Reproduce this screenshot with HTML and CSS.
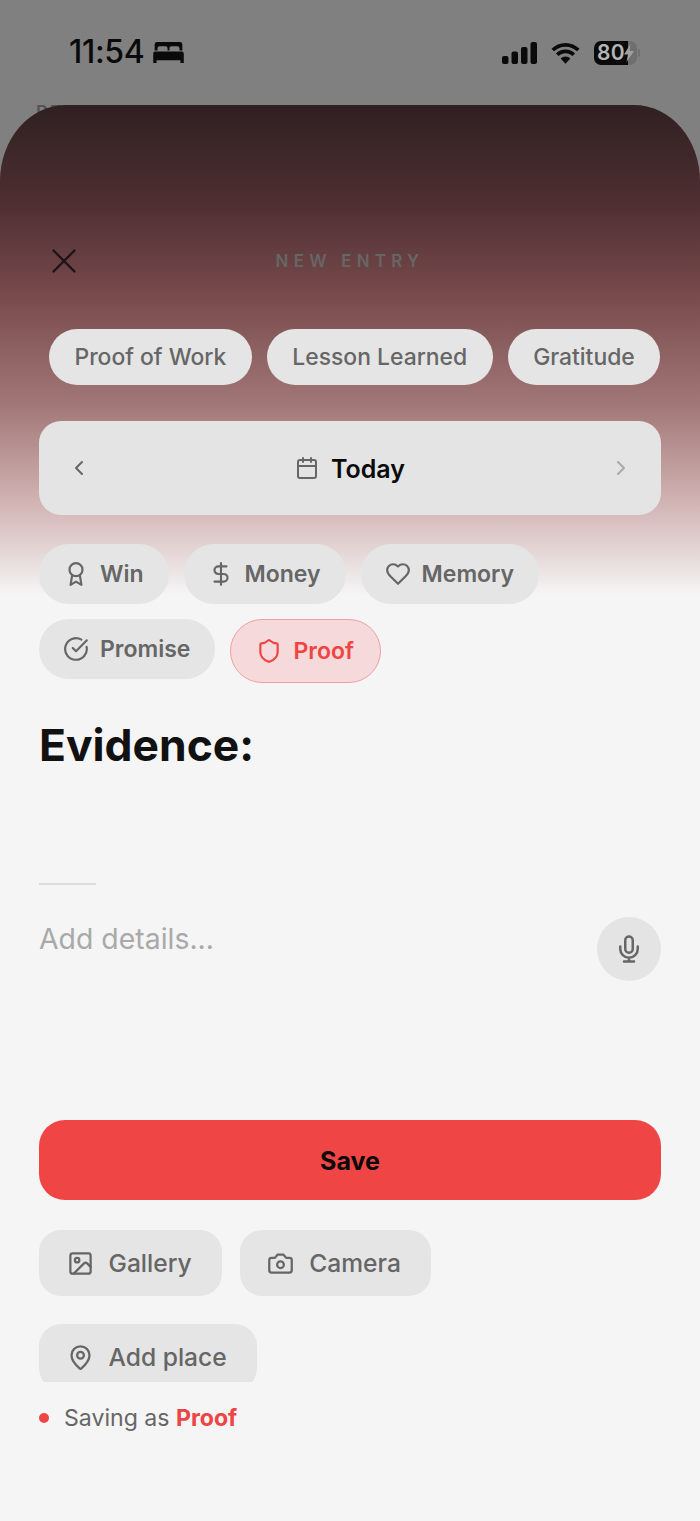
FILE: index.html
```html
<!DOCTYPE html>
<html lang="en">
<head>
    <meta charset="UTF-8">
    <title>New Entry</title>
    <link rel="stylesheet" href="styles.css">
</head>
<body>
    <div class="behind">RECENT</div>

    <header class="status">
        <div class="status-left">
            <span class="time">11:54</span>
            <svg class="bed" viewBox="0 0 32 22"><path d="M4 0h24a2.500 2.500 0 0 1 2.500 2.500V9h-3V6.500a2 2 0 0 0-2-2H19a2 2 0 0 0-2 2V9h-2V6.500a2 2 0 0 0-2-2H6.500a2 2 0 0 0-2 2V9h-3V2.500A2.500 2.500 0 0 1 4 0zM2 10h28a2 2 0 0 1 2 2v10h-3.500v-3h-25v3H0V12a2 2 0 0 1 2-2z"/></svg>
        </div>
        <div class="status-right">
            <svg class="signal" viewBox="0 0 35 22"><rect x="0" y="14" width="6.500" height="8" rx="2"/><rect x="9.500" y="9.500" width="6.500" height="12.500" rx="2"/><rect x="19" y="5" width="6.500" height="17" rx="2"/><rect x="28.500" y="0" width="6.500" height="22" rx="2"/></svg>
            <svg class="wifi" viewBox="0 0 32 22"><path d="M16 4.500c4.600 0 8.800 1.800 11.900 4.800l2.600-2.700C26.700 2.900 21.600.6 16 .6S5.300 2.900 1.500 6.600l2.600 2.700C7.200 6.300 11.400 4.500 16 4.500z"/><path d="M16 11.200c2.800 0 5.300 1.100 7.200 2.900l2.700-2.700c-2.600-2.500-6-4-9.900-4s-7.300 1.500-9.900 4l2.700 2.700c1.900-1.800 4.400-2.900 7.200-2.900z"/><path d="M16 22l5-5.300c-1.300-1.200-3.100-2-5-2s-3.700.8-5 2z"/></svg>
            <div class="battery">
                <div class="battery-body">
                    <span class="battery-num">80</span>
                    <svg class="bolt" viewBox="0 0 10 18"><path d="M6.500 0L0 10.500h4L2.500 18 10 7H5.500z"/></svg>
                </div>
                <span class="battery-cap"></span>
            </div>
        </div>
    </header>

    <main class="sheet">
        <div class="scroll">
            <div class="topbar">
                <svg class="close" viewBox="0 0 24 24"><path d="M3 3l18 18M21 3L3 21"/></svg>
                <span class="topbar-title">NEW ENTRY</span>
            </div>

            <div class="templates">
                <span class="template">Proof of Work</span>
                <span class="template">Lesson Learned</span>
                <span class="template">Gratitude</span>
            </div>

            <div class="date-card">
                <svg class="chev" viewBox="0 0 24 24"><path d="M15 18l-6-6 6-6"/></svg>
                <div class="date-mid">
                    <svg class="icon-cal" viewBox="0 0 24 24"><path d="M8 2v4M16 2v4M3 10h18"/><rect x="3" y="4" width="18" height="18" rx="2"/></svg>
                    <span class="date-label">Today</span>
                </div>
                <svg class="chev chev-off" viewBox="0 0 24 24"><path d="M9 18l6-6-6-6"/></svg>
            </div>

            <div class="kinds">
                <span class="kind">
                    <svg viewBox="0 0 24 24"><path d="M15.500 12.900L17 22l-5-3-5 3 1.500-9.100"/><circle cx="12" cy="8" r="6"/></svg>
                    Win
                </span>
                <span class="kind">
                    <svg viewBox="0 0 24 24"><path d="M12 2v20M17 5H9.500a3.500 3.500 0 0 0 0 7h5a3.500 3.500 0 0 1 0 7H6"/></svg>
                    Money
                </span>
                <span class="kind">
                    <svg viewBox="0 0 24 24"><path d="M19 14c1.500-1.500 3-3.200 3-5.500A5.500 5.500 0 0 0 16.500 3c-1.800 0-3 .5-4.500 2-1.500-1.500-2.700-2-4.500-2A5.500 5.500 0 0 0 2 8.500c0 2.300 1.500 4 3 5.500l7 7z"/></svg>
                    Memory
                </span>
                <span class="kind">
                    <svg viewBox="0 0 24 24"><path d="M21.800 10A10 10 0 1 1 17 3.300"/><path d="M9 11l3 3L22 4"/></svg>
                    Promise
                </span>
                <span class="kind kind-active">
                    <svg viewBox="0 0 24 24"><path d="M20 13c0 5-3.500 7.500-7.700 9a1 1 0 0 1-.6 0C7.500 20.500 4 18 4 13V6a1 1 0 0 1 1-1c2 0 4.500-1.200 6.200-2.700a1.200 1.200 0 0 1 1.600 0C14.500 3.800 17 5 19 5a1 1 0 0 1 1 1z"/></svg>
                    Proof
                </span>
            </div>

            <h1 class="prompt">Evidence:</h1>
            <div class="rule"></div>

            <div class="details">
                <span class="details-hint">Add details...</span>
                <button class="mic">
                    <svg viewBox="0 0 24 24"><path d="M12 2a3 3 0 0 0-3 3v7a3 3 0 0 0 6 0V5a3 3 0 0 0-3-3z"/><path d="M19 10v2a7 7 0 0 1-14 0v-2M12 19v3M8 22h8"/></svg>
                </button>
            </div>

            <button class="save">Save</button>

            <div class="attach">
                <span class="attach-btn">
                    <svg viewBox="0 0 24 24"><rect x="3" y="3" width="18" height="18" rx="2"/><circle cx="9" cy="9" r="2"/><path d="M21 15l-3.100-3.100a2 2 0 0 0-2.800 0L6 21"/></svg>
                    Gallery
                </span>
                <span class="attach-btn">
                    <svg viewBox="0 0 24 24"><path d="M14.500 4h-5L7 7H4a2 2 0 0 0-2 2v9a2 2 0 0 0 2 2h16a2 2 0 0 0 2-2V9a2 2 0 0 0-2-2h-3z"/><circle cx="12" cy="13" r="3"/></svg>
                    Camera
                </span>
                <span class="attach-btn">
                    <svg viewBox="0 0 24 24"><path d="M20 10c0 5-5.500 10.200-7.400 11.800a1 1 0 0 1-1.200 0C9.500 20.200 4 15 4 10a8 8 0 0 1 16 0z"/><circle cx="12" cy="10" r="3"/></svg>
                    Add place
                </span>
            </div>
        </div>

        <footer class="saving">
            <span class="dot"></span>
            <span>Saving as <strong>Proof</strong></span>
        </footer>
    </main>
</body>
</html>
```

FILE: styles.css
```css
* {
    box-sizing: border-box;
}
html, body {
    height: 100%;
}
body {
    margin: 0;
    height: 1521px;
    overflow: hidden;
    background-color: #808080;
    font-family: Inter, "Noto Sans", sans-serif;
    color: #666;
    display: flex;
    flex-direction: column;
}
svg {
    fill: none;
    stroke: currentColor;
    stroke-width: 2;
    stroke-linecap: round;
    stroke-linejoin: round;
    flex-shrink: 0;
}
.behind {
    position: absolute;
    left: 36px;
    top: 102px;
    font-size: 18px;
    font-weight: 600;
    letter-spacing: 2px;
    color: #555;
}
.status {
    position: relative;
    height: 105px;
    padding: 36px 60px 0 69px;
    display: flex;
    justify-content: space-between;
    align-items: flex-start;
    color: #0a0a0a;
}
.status-left {
    display: flex;
    align-items: center;
    gap: 8px;
}
.time {
    font-family: Inter, sans-serif;
    font-size: 32px;
    font-weight: 500;
    line-height: 32px;
    letter-spacing: -0.3px;
}
.bed {
    width: 31px;
    height: 21px;
    fill: #0a0a0a;
    stroke: none;
}
.status-right {
    display: flex;
    align-items: center;
    gap: 13px;
    padding-top: 5px;
}
.signal, .wifi {
    fill: #0a0a0a;
    stroke: none;
    height: 22px;
}
.signal {
    width: 35px;
}
.wifi {
    width: 31px;
}
.battery {
    display: flex;
    align-items: center;
    gap: 1px;
}
.battery-body {
    width: 43px;
    height: 24px;
    border-radius: 7px;
    background: linear-gradient(to right, #0a0a0a 78%, #6f6f6f 78%);
    color: #b5b5b5;
    display: flex;
    align-items: center;
    padding-left: 3px;
}
.battery-num {
    font-size: 21px;
    font-weight: 600;
    line-height: 24px;
    letter-spacing: 0.3px;
}
.bolt {
    width: 10px;
    height: 18px;
    fill: #a0a0a0;
    stroke: none;
    margin-left: -1px;
}
.battery-cap {
    width: 2px;
    height: 8px;
    border-radius: 0 2px 2px 0;
    background-color: #707070;
}
.sheet {
    position: relative;
    flex: 1;
    min-height: 0;
    display: flex;
    flex-direction: column;
    border-radius: 66px 66px 0 0 / 76px 76px 0 0;
    background: linear-gradient(to bottom, #2f2021 0, #4f2f32 100px, #7a4c4e 195px, #a27777 300px, #d3b5b5 400px, #f5f5f5 490px);
}
.scroll {
    height: 1277px;
    overflow: hidden;
    padding: 0 39px;
}
.topbar {
    position: relative;
    height: 48px;
    margin-top: 132px;
    display: flex;
    align-items: center;
    justify-content: center;
}
.close {
    position: absolute;
    left: 11px;
    top: 10px;
    width: 28px;
    height: 28px;
    color: #1c1416;
}
.topbar-title {
    font-size: 17px;
    font-weight: 600;
    letter-spacing: 5.2px;
    color: #666;
}
.templates {
    margin-top: 44px;
    padding-left: 10px;
    display: flex;
    gap: 15px;
}
.template {
    height: 56px;
    padding: 0 25.500px;
    border-radius: 28px;
    background-color: #e5e5e5;
    font-size: 22.900px;
    font-weight: 500;
    line-height: 56px;
    white-space: nowrap;
}
.date-card {
    margin-top: 36px;
    height: 94px;
    padding: 0 28px;
    border-radius: 22px;
    background-color: #e4e4e4;
    display: flex;
    align-items: center;
    justify-content: space-between;
}
.chev {
    width: 24px;
    height: 24px;
}
.chev-off {
    color: #aaa;
}
.date-mid {
    display: flex;
    align-items: center;
    gap: 12px;
}
.icon-cal {
    width: 24px;
    height: 24px;
}
.date-label {
    font-size: 25px;
    font-weight: 600;
    color: #0a0a0a;
    padding-top: 2px;
}
.kinds {
    margin-top: 29px;
    display: flex;
    flex-wrap: wrap;
    gap: 15px;
}
.kind {
    height: 60px;
    padding: 0 25px 0 24px;
    border-radius: 30px;
    background-color: #e5e5e5;
    display: flex;
    align-items: center;
    gap: 11px;
    font-size: 23px;
    font-weight: 600;
}
.kind svg {
    width: 26px;
    height: 26px;
}
.kind-active {
    height: 64px;
    padding: 0 26px 0 25px;
    border-radius: 32px;
    border: 1.500px solid #f0a0a2;
    background-color: #f6d9da;
    color: #ef4444;
}
.prompt {
    margin: 36px 0 0;
    font-size: 44.400px;
    line-height: 52px;
    font-weight: 700;
    color: #111;
}
.rule {
    margin-top: 112px;
    width: 57px;
    height: 2px;
    background-color: #dcdcdc;
}
.details {
    margin-top: 32px;
    height: 203px;
    display: flex;
    justify-content: space-between;
    align-items: flex-start;
}
.details-hint {
    font-size: 28.400px;
    line-height: 44px;
    color: #a9a9a9;
}
.mic {
    width: 64px;
    height: 64px;
    border: none;
    border-radius: 50%;
    padding: 0;
    background-color: #e4e4e4;
    color: #666;
    display: flex;
    align-items: center;
    justify-content: center;
}
.mic svg {
    width: 30px;
    height: 30px;
}
.save {
    display: block;
    width: 100%;
    height: 80px;
    padding-top: 3px;
    border: none;
    border-radius: 26px;
    background-color: #f04545;
    color: #0a0a0a;
    font-family: inherit;
    font-size: 25px;
    font-weight: 700;
}
.attach {
    margin-top: 30px;
    display: flex;
    flex-wrap: wrap;
    gap: 28px 18px;
    width: 460px;
}
.attach-btn {
    height: 66px;
    padding: 0 30px 0 27.500px;
    border-radius: 22px;
    background-color: #e5e5e5;
    display: flex;
    align-items: center;
    gap: 15px;
    font-size: 24.600px;
    font-weight: 500;
}
.attach-btn svg {
    width: 27px;
    height: 27px;
}
.saving {
    padding: 21px 39px 0;
    display: flex;
    align-items: center;
    gap: 15px;
    font-size: 23.100px;
    line-height: 30px;
}
.saving strong {
    color: #ef4444;
    font-weight: 700;
}
.dot {
    width: 10px;
    height: 10px;
    border-radius: 50%;
    background-color: #ef4444;
}
```
